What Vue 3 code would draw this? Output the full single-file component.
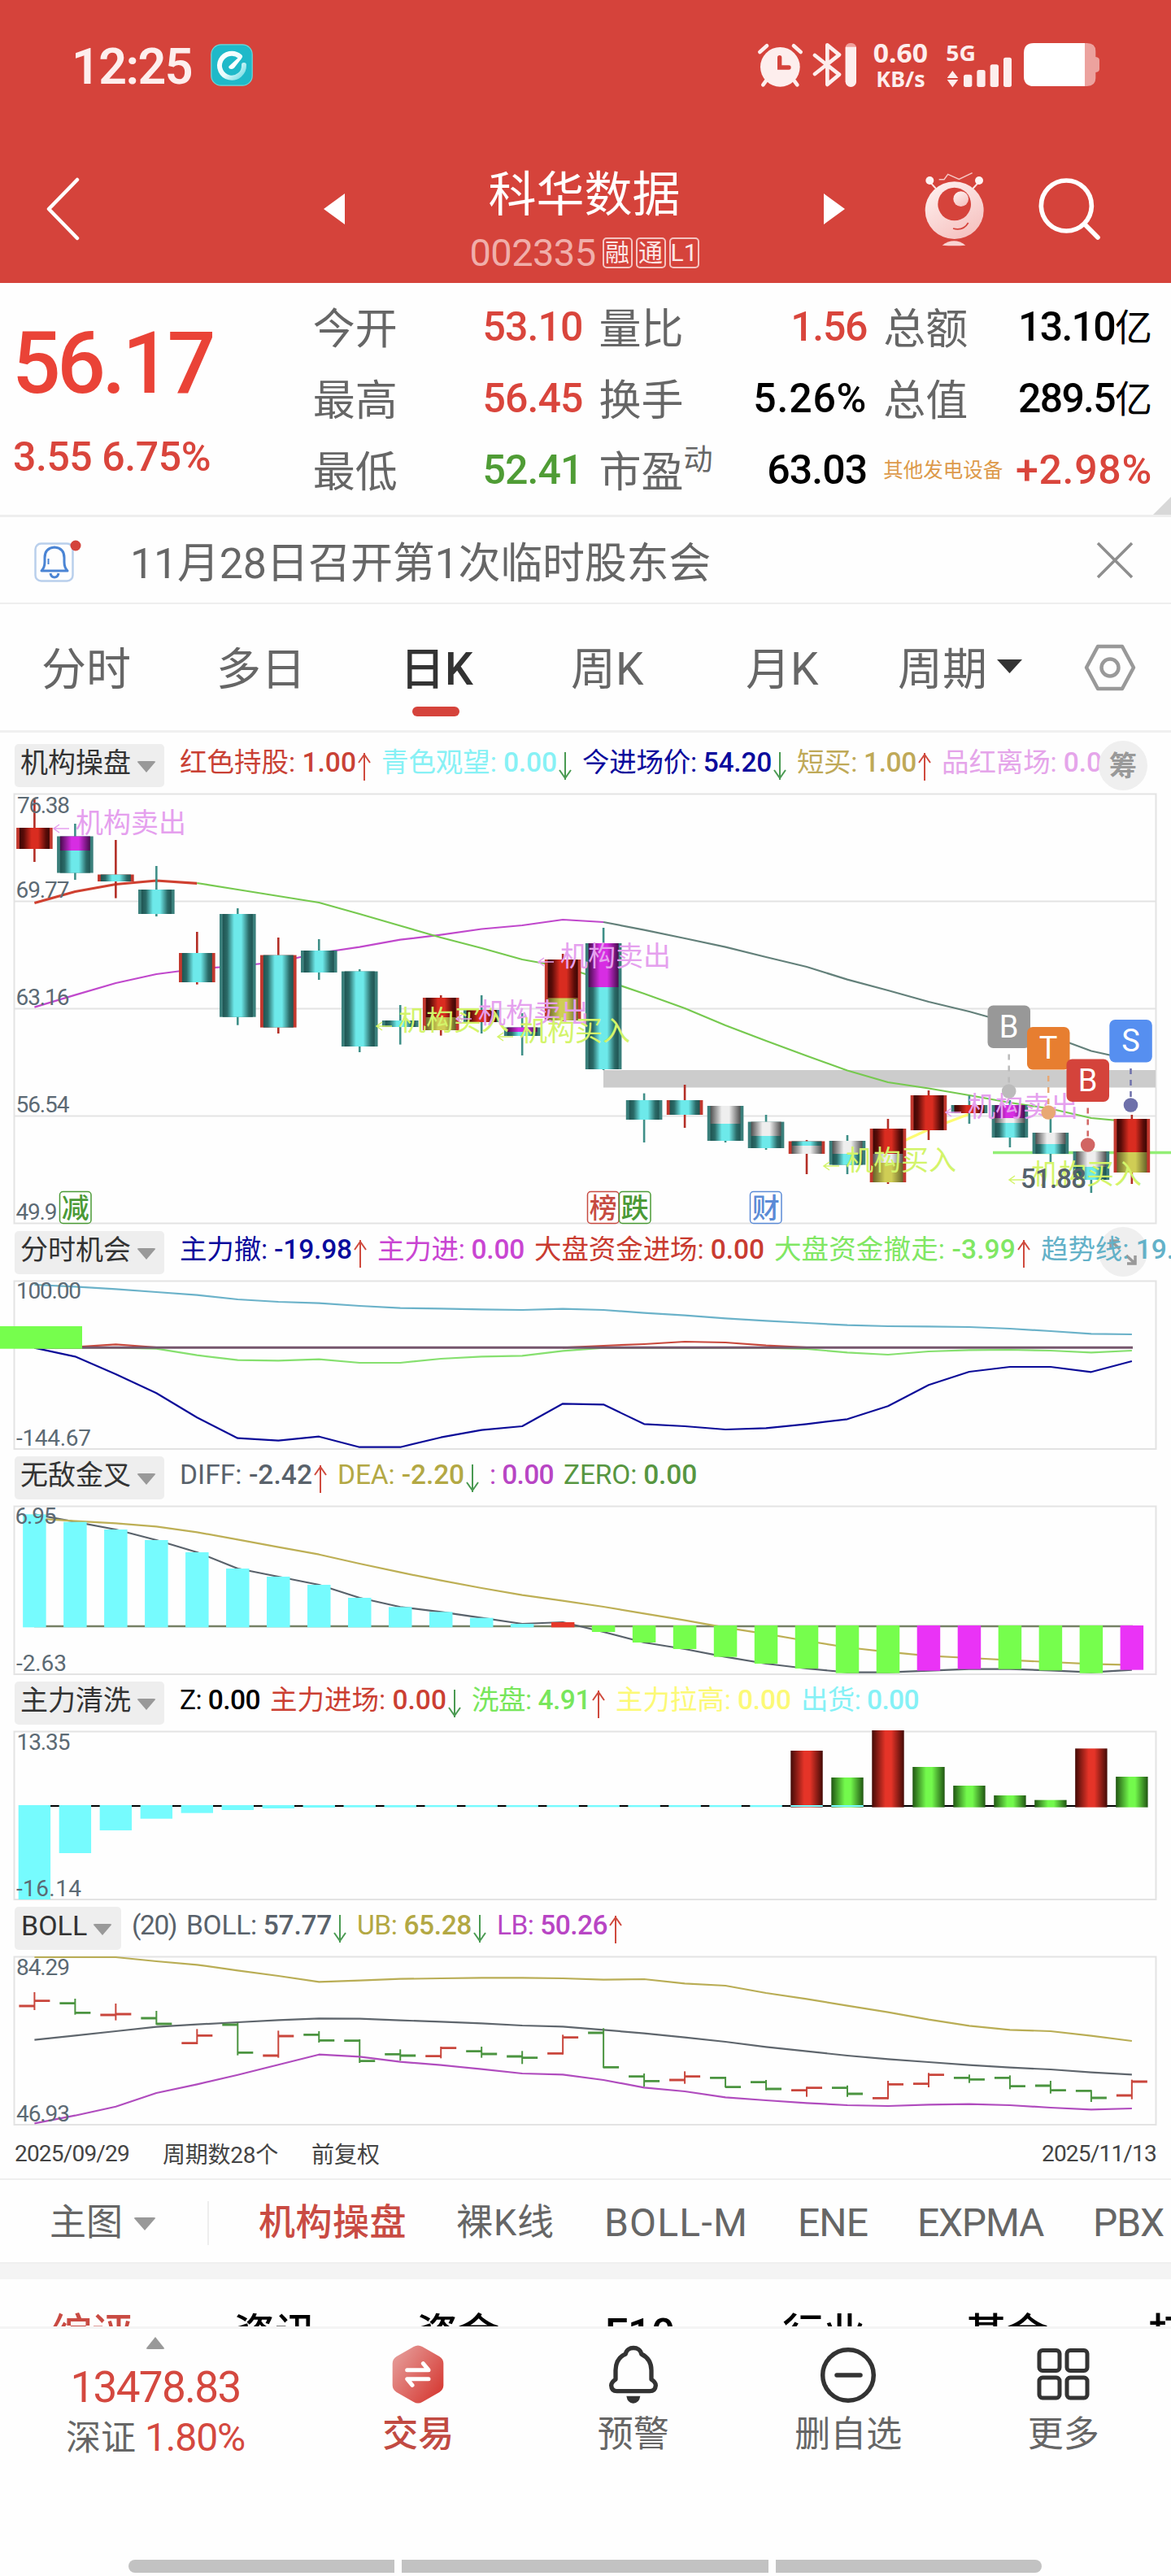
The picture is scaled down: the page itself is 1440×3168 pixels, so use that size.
<script setup>
// Tightens or loosens letter spacing so a label fills its column exactly.
const vFit = {
  mounted(el, { value }) {
    if (!value) return
    const natural = el.getBoundingClientRect().width
    const count = [...el.textContent.trim()].length
    el.style.letterSpacing = `${(value - natural) / count}px`
  }
}

const px = (i) => 42.4 + 49.98 * i
const line = (ys, start = 0, scale = (v) => v) =>
  ys.map((v, i) => `${px(i + start).toFixed(1)},${scale(v).toFixed(1)}`).join(' ')

const quotes = [
  [
    { k: '今开', v: '53.10', w: 123, c: 'red' },
    { k: '最高', v: '56.45', w: 123, c: 'red' },
    { k: '最低', v: '52.41', w: 123, c: 'green' }
  ],
  [
    { k: '量比', v: '1.56', w: 94, c: 'red' },
    { k: '换手', v: '5.26%', w: 140, c: 'black' },
    { k: '市盈', sup: '动', v: '63.03', w: 123, c: 'black' }
  ],
  [
    { k: '总额', v: '13.10', unit: '亿', w: 119, c: 'black' },
    { k: '总值', v: '289.5', unit: '亿', w: 119, c: 'black' },
    { k: '其他发电设备', small: true, v: '+2.98%', w: 168, c: 'red' }
  ]
]

const tabs = ['分时', '多日', '日K', '周K', '月K', '周期']

// name, value, colour, width, trend arrow
const legends = {
  main: [
    ['红色持股: ', '1.00', '#c94135', 217, 'up'],
    ['青色观望: ', '0.00', '#87f1f5', 216, 'down'],
    ['今进场价: ', '54.20', '#0a0a9c', 233, 'down'],
    ['短买: ', '1.00', '#bfa958', 147, 'up'],
    ['品红离场: ', '0.0', '#e5a5ea', 197]
  ],
  chance: [
    ['主力撤: ', '-19.98', '#0a0a9c', 212, 'up'],
    ['主力进: ', '0.00', '#c945d2', 181],
    ['大盘资金进场: ', '0.00', '#c93b30', 283],
    ['大盘资金撤走: ', '-3.99', '#80e763', 297, 'up'],
    ['趋势线: ', '19.', '#63b1c8', 164]
  ],
  cross: [
    ['DIFF: ', '-2.42', '#59626b', 163, 'up'],
    ['DEA: ', '-2.20', '#b3a844', 156, 'down'],
    [': ', '0.00', '#b845c4', 79],
    ['ZERO: ', '0.00', '#579641', 164]
  ],
  wash: [
    ['Z: ', '0.00', '#000', 99],
    ['主力进场: ', '0.00', '#cb3f32', 217, 'down'],
    ['洗盘: ', '4.91', '#78e65b', 146, 'up'],
    ['主力拉高: ', '0.00', '#fcf976', 216],
    ['出货: ', '0.00', '#85f1f6', 145]
  ],
  boll: [
    ['(20)', '', '#59626b', 55],
    ['BOLL: ', '57.77', '#59626b', 179, 'down'],
    ['UB: ', '65.28', '#b3a844', 141, 'down'],
    ['LB: ', '50.26', '#b845c4', 136, 'up']
  ]
}

// high, top, bottom, low, edge colour, body segments [fill, until]
const candles = [
  [983, 1018, 1044, 1060, 'r', [['red', 1044]]],
  [1013, 1028.5, 1073.5, 1082, 't', [['mag', 1046], ['cy', 1073.5]]],
  [1033, 1075.5, 1084, 1104.6, 'r', [['cy', 1084]]],
  [1065, 1094, 1124, 1127, 't', [['cy', 1124]]],
  [1146, 1172, 1208, 1210.7, 'r', [['cy', 1208]]],
  [1117, 1124, 1250.7, 1260.7, 't', [['cy', 1250.7]]],
  [1153, 1174.6, 1263.6, 1271, 'r', [['cy', 1263.6]]],
  [1155, 1169, 1196, 1205, 't', [['cy', 1196]]],
  [1192, 1194.6, 1287, 1294, 't', [['cy', 1287]]],
  [1236, 1255, 1263, 1284.6, 't', [['cy', 1263]]],
  [1224, 1227, 1267, 1273.6, 'r', [['red', 1251], ['ye', 1267]]],
  [1224, 1242, 1257, 1271, 't', [['red', 1257]]],
  [1246, 1263.5, 1274, 1298, 't', [['mag', 1269], ['cy', 1274]]],
  [1173, 1180, 1255, 1256, 'r', [['red', 1227.5], ['ye', 1255]]],
  [1141, 1160, 1315, 1316, 't', [['mag', 1214], ['cy', 1315]]],
  [1344.6, 1353, 1377, 1405, 't', [['cy', 1377]]],
  [1334, 1353, 1371, 1387, 'r', [['cy', 1371]]],
  [1360, 1360, 1403, 1405, 't', [['wh', 1382], ['cy', 1403]]],
  [1371, 1379.6, 1412, 1414, 't', [['wh', 1397], ['cy', 1412]]],
  [1402, 1403.5, 1419, 1444, 'r', [['cy', 1409], ['wh', 1419]]],
  [1396, 1403, 1432.5, 1444, 't', [['wh', 1419], ['cy', 1432.5]]],
  [1376, 1388, 1454, 1456, 'r', [['red', 1419], ['wh', 1430], ['ye', 1454]]],
  [1341, 1347, 1390, 1402, 'r', [['red', 1390]]],
  [1347.5, 1359, 1369, 1382, 't', [['red', 1369]]],
  [1353, 1359, 1399, 1411, 't', [['mag', 1375], ['wh', 1381], ['cy', 1399]]],
  [1376, 1393, 1419, 1431, 't', [['wh', 1407], ['cy', 1419]]],
  [1416, 1416, 1451, 1467, 't', [['wh', 1435], ['cy', 1451]]],
  [1371, 1376, 1442, 1456, 'r', [['red', 1417], ['ye', 1442]]]
].map(([high, top, bottom, low, edge, parts], i) => {
  let y = top
  const segments = parts.map(([fill, end]) => {
    const s = { fill: `url(#g-${fill})`, y, h: end - y }
    y = end
    return s
  })
  return { x: px(i), high, top, bottom, low, segments, stroke: edge === 'r' ? '#b32e26' : '#3f8f88', side: edge === 'r' ? '#c2382e' : '#3a7f7b' }
})

const ma = {
  red: line([1110.5, 1096.5, 1087.5, 1083, 1086.4]),
  green: line([1086, 1094, 1102, 1110, 1124, 1138.5, 1153, 1166, 1180, 1189, 1205, 1222, 1240, 1261, 1280, 1298.5, 1316.5, 1331, 1338.5, 1347, 1356, 1363.5, 1375, 1379.6], 4),
  magenta: line([1238.6, 1223.6, 1209, 1198, 1191.5, 1188, 1183, 1172, 1164.6, 1155.7, 1149.6, 1142.5, 1138, 1131, 1134]),
  slate: line([1134, 1143.6, 1154, 1164.6, 1177, 1189, 1204.6, 1218, 1232, 1244, 1258, 1274, 1292.5, 1303.5], 14)
}

const notes = [
  ['sell', 94, 1024], ['buy', 491, 1267], ['sell', 589, 1258], ['buy', 640, 1280],
  ['sell', 690, 1188], ['buy', 1041, 1439], ['sell', 1191, 1373], ['buy', 1269, 1456]
]

const events = [
  ['减', 73.5, '#4b9a36'], ['榜', 722.5, '#c74b42'], ['跌', 761.5, '#4b9a36'], ['财', 922.5, '#5b8bd6']
]

const signals = [
  { t: 'B', x: 1214.5, y: 1236.5, dot: 1342, fill: '#989898', soft: '#bbb' },
  { t: 'T', x: 1263, y: 1263, dot: 1368, fill: '#e77e30', soft: '#e8a873' },
  { t: 'B', x: 1311.5, y: 1302.5, dot: 1408, fill: '#d4433b', soft: '#d16563' },
  { t: 'S', x: 1364.3, y: 1254, dot: 1359, fill: '#568ff0', soft: '#6e70aa' }
]

const s2 = (v) => 1500 + v / 3
const chance = {
  trend: line([240, 247, 256, 267, 278, 294, 303, 308, 318, 326, 328, 331, 333, 329, 333, 344, 353, 364, 373, 381, 389, 393, 394, 396, 402, 411, 421, 423], 0, s2),
  out: line([473, 505, 570, 640, 730, 806, 815, 800, 839, 839, 803, 776, 762, 679, 682, 754, 762, 774, 769, 754, 736, 688, 610, 561, 543, 543, 562, 522], 0, s2),
  green: line([472, 472, 472, 476, 500, 518, 520, 515, 528, 528, 513, 505, 502, 484, 473, 473, 473, 473, 473, 477, 490, 498, 486, 481, 480, 483, 490, 483], 0, s2),
  red: line([470, 460, 471], 1, s2),
  redTail: line([472, 465, 459, 450, 453, 464, 471], 13, s2)
}

const s3 = (v) => 1780 + v / 3
const diffEnds = [247, 275, 303, 342, 387, 447, 477, 507, 555, 589, 607, 629, 651, 645, 681, 720, 744, 773, 798, 816, 833, 833, 824, 818, 818, 823, 833, 821]
const crossBars = diffEnds.map((v, i) => {
  const above = i < 14
  const y = above ? s3(v) : s3(657)
  const fill = i < 13 ? '#76fbfe' : i === 13 ? '#e5382a' : [22, 23, 27].includes(i) ? '#ea33f6' : '#76fe4d'
  return { x: px(i) - 14.25, y, h: above ? s3(664) - y : s3(v) - y, fill }
})
const diffLine = line(diffEnds.map((v) => (v > 830 ? 830 : v)), 0, s3)
const deaLine = line([262, 272, 280, 292, 313, 340, 368, 395, 429, 461, 491, 519, 545, 566, 588, 613, 638, 665, 688, 714, 738, 755, 769, 777, 785, 792, 799, 803], 0, s3)

const s4 = (v) => 2060 + v / 3
const washDown = [828, 657, 573, 530, 509, 498, 492, 489, 488, 488, 487, 487, 487, 487, 487, 487, 487, 487, 487, 486, 486]
  .map((v, i) => ({ x: px(i) - 19.7, y: s4(480), h: (v - 480) / 3 }))
const washUp = [['r', 279], ['g', 378], ['r', 204], ['g', 339], ['g', 408], ['g', 444], ['g', 461], ['r', 271], ['g', 375]]
  .map(([c, v], i) => ({ x: px(i + 19) - 19.7, y: s4(v), h: (488 - v) / 3, fill: c === 'r' ? 'url(#g-bred)' : 'url(#g-bgreen)' }))

const s5 = (v) => 2330 + v / 3
const boll = {
  ub: line([231, 231, 231, 246, 259, 280, 300, 322, 317, 311, 309, 307, 307, 309, 314, 312, 328, 336, 363, 385, 410, 434, 461, 484, 499, 504, 521, 540], 0, s5),
  mid: line([536, 520, 504, 488, 479, 471, 463, 457, 458, 464, 469, 475, 483, 487, 499, 512, 527, 543, 562, 578, 594, 607, 618, 629, 638, 645, 656, 664], 0, s5),
  lb: line([844, 815, 782, 732, 700, 665, 628, 590, 598, 617, 629, 644, 660, 664, 684, 712, 726, 748, 759, 769, 777, 780, 775, 773, 777, 786, 793, 789], 0, s5)
}
// open, high, low, close
const ohlc = [
  [411, 360, 426, 392], [401, 384, 443, 436], [444, 402, 464, 441], [456, 429, 480, 477],
  [548, 496, 552, 520], [480, 473, 593, 583], [594, 502, 602, 522], [517, 504, 546, 538],
  [539, 534, 621, 614], [589, 571, 613, 594], [596, 561, 604, 566], [578, 561, 602, 588],
  [597, 577, 625, 602], [586, 517, 590, 527], [510, 493, 640, 637], [671, 660, 709, 688],
  [684, 652, 698, 671], [676, 672, 712, 710], [692, 684, 722, 717], [722, 709, 746, 713],
  [713, 704, 746, 735], [751, 687, 755, 700], [698, 658, 711, 665], [676, 664, 695, 682],
  [676, 667, 718, 707], [705, 687, 734, 722], [724, 721, 765, 750], [741, 683, 755, 690]
].map(([o, h, l, c], i) => ({ x: px(i), o: s5(o), h: s5(h), l: s5(l), c: s5(c), color: c < o ? '#c9463c' : '#4b9440' }))

const subTabs = [
  { t: '机构操盘', w: 182, on: true }, { t: '裸K线', w: 121 }, { t: 'BOLL-M', w: 177, en: true },
  { t: 'ENE', w: 86, en: true }, { t: 'EXPMA', w: 155, en: true }, { t: 'PBX', w: 87, en: true }
]
const infoTabs = ['综评', '资讯', '资金', 'F10', '行业', '基金', '打新']
</script>

<template>
  <main class="app">
    <svg class="defs" width="0" height="0" aria-hidden="true">
      <defs>
        <linearGradient id="g-red"><stop offset="0" stop-color="#3d0705" /><stop offset=".14" stop-color="#5a0c08" /><stop offset=".4" stop-color="#d92c20" /><stop offset=".62" stop-color="#d92c20" /><stop offset=".88" stop-color="#5a0c08" /><stop offset="1" stop-color="#3d0705" /></linearGradient>
        <linearGradient id="g-cy"><stop offset="0" stop-color="#205452" /><stop offset=".15" stop-color="#2a6a67" /><stop offset=".38" stop-color="#6de9ea" /><stop offset=".62" stop-color="#6de9ea" /><stop offset=".87" stop-color="#2a6a67" /><stop offset="1" stop-color="#205452" /></linearGradient>
        <linearGradient id="g-mag"><stop offset="0" stop-color="#470b4c" /><stop offset=".38" stop-color="#d72de3" /><stop offset=".62" stop-color="#d72de3" /><stop offset="1" stop-color="#470b4c" /></linearGradient>
        <linearGradient id="g-wh"><stop offset="0" stop-color="#505050" /><stop offset=".38" stop-color="#eee" /><stop offset=".62" stop-color="#eee" /><stop offset="1" stop-color="#505050" /></linearGradient>
        <linearGradient id="g-ye"><stop offset="0" stop-color="#67632a" /><stop offset=".4" stop-color="#cfcd55" /><stop offset=".62" stop-color="#cfcd55" /><stop offset="1" stop-color="#67632a" /></linearGradient>
        <linearGradient id="g-bred"><stop offset="0" stop-color="#430a06" /><stop offset=".42" stop-color="#e53428" /><stop offset=".6" stop-color="#e53428" /><stop offset="1" stop-color="#430a06" /></linearGradient>
        <linearGradient id="g-bgreen"><stop offset="0" stop-color="#205512" /><stop offset=".42" stop-color="#73f94c" /><stop offset=".6" stop-color="#73f94c" /><stop offset="1" stop-color="#205512" /></linearGradient>
        <linearGradient id="g-robot" x1="0" y1="0" x2=".6" y2="1"><stop offset="0" stop-color="#fff4f3" /><stop offset="1" stop-color="#f6c4c2" /></linearGradient>
        <linearGradient id="g-trade" x1="0" y1="0.1" x2="1" y2=".9"><stop offset="0" stop-color="#e6a09d" /><stop offset="1" stop-color="#d5352e" /></linearGradient>
        <linearGradient id="g-app" x1="0" y1="0" x2="1" y2="1"><stop offset="0" stop-color="#fff" /><stop offset=".55" stop-color="#e9fbfc" /><stop offset="1" stop-color="#6fdbe3" /></linearGradient>
      </defs>
    </svg>

    <header class="header">
      <div class="status">
        <span v-fit="148" class="clock">12:25</span>
        <svg class="app-badge" width="52" height="52" viewBox="0 0 52 52">
          <rect x=".8" y=".8" width="50.4" height="50.4" rx="12" fill="#1fb9c9" stroke="#72d5d6" stroke-width="1.2" />
          <path d="M36 15.5A15 15 0 1 0 41 26" fill="none" stroke="url(#g-app)" stroke-width="6" stroke-linecap="round" />
          <path d="M22.5 27.5L35 16l3 2-9 11.5c-2 2.500-8 1.500-6.500-2z" fill="#fff" />
        </svg>
        <svg class="status-icons" width="425" height="63.33" viewBox="30 30 1275 190" fill="#fdeeed">
          <circle cx="118" cy="127" r="73" />
          <g stroke="#fdeeed" stroke-width="14" stroke-linecap="round"><path d="M43 72l26-23M194 72l-26-23M66 178l-11 15M170 178l11 15" /></g>
          <path d="M116 92v37h34" fill="none" stroke="#d5433b" stroke-width="16" stroke-linecap="round" />
          <path d="M246 84l90 71-44 37V46l44 36-90 71" fill="none" stroke="#fdeeed" stroke-width="14" stroke-linecap="round" stroke-linejoin="round" />
          <rect x="359" y="39" width="40" height="159" rx="17" fill="#f0a09b" />
          <path d="M359 53h40v128a17 17 0 0 1-40 0z" />
          <g font-family="'Noto Sans', sans-serif" font-weight="700">
            <text x="461" y="112" font-size="96" textLength="202" lengthAdjust="spacingAndGlyphs">0.60</text>
            <text x="472" y="200" font-size="82" textLength="181" lengthAdjust="spacingAndGlyphs">KB/s</text>
            <text x="730" y="104" font-size="82" textLength="110" lengthAdjust="spacingAndGlyphs">5G</text>
          </g>
          <path d="M734 168l20-27 21 27zM734 174h41l-21 28z" />
          <rect x="795" y="155" width="31" height="46" rx="8" /><rect x="844" y="138" width="31" height="63" rx="8" />
          <rect x="893" y="118" width="31" height="83" rx="8" /><rect x="942" y="92" width="30" height="109" rx="8" />
          <path d="M1240 39h10q32 0 32 30v21q14 2 14 12v33q0 10-14 12v21q0 30-32 30h-10z" fill="#eca29e" />
          <path d="M1242 39h-188q-37 0-37 37v85q0 37 37 37h188z" fill="#fff" />
        </svg>
      </div>

      <nav class="nav">
        <svg class="back" width="44" height="78" viewBox="0 0 44 78"><path d="M40 3L5 39l35 36" fill="none" stroke="#fff" stroke-width="4.500" stroke-linecap="round" stroke-linejoin="round" /></svg>
        <svg class="prev" width="26" height="38" viewBox="0 0 26 38"><path d="M0 19L26 0v38z" fill="#fff" /></svg>
        <div class="title">
          <h1>科华数据</h1>
          <div class="code"><span v-fit="155" class="num">002335</span><i>融</i><i>通</i><i>L1</i></div>
        </div>
        <svg class="next" width="26" height="38" viewBox="0 0 26 38"><path d="M26 19L0 0v38z" fill="#fff" /></svg>
        <svg class="robot" width="83.33" height="100" viewBox="640 500 250 300">
          <g stroke="#fbe3e1" fill="none" stroke-width="6"><path d="M676 555l18 20M848 555l-18 20" /><path d="M705 541h19l14-19 41 18 49-23" stroke="#f6c8c5" stroke-width="4.500" /></g>
          <circle cx="671" cy="545" r="15" fill="#fff3f2" /><circle cx="853" cy="545" r="15" fill="#fff3f2" />
          <ellipse cx="762" cy="655" rx="108" ry="106" fill="url(#g-robot)" />
          <circle cx="762" cy="632" r="61" fill="#d5433b" />
          <circle cx="786" cy="613" r="28" fill="url(#g-robot)" />
          <path d="M757 722q38 10 56-21" fill="none" stroke="#d5433b" stroke-width="5" />
          <path d="M717 784q44-33 86 0-42 4-86 0z" fill="#f9d3d1" />
        </svg>
        <svg class="search" width="81.67" height="81.67" viewBox="1065 525 245 245" fill="none" stroke="#fff" stroke-width="17" stroke-linecap="round"><circle cx="1177" cy="639" r="93" /><path d="M1246 709l47 47" /></svg>
      </nav>
    </header>

    <section class="quote">
      <div class="price">
        <strong v-fit="246">56.17</strong>
        <span v-fit="243">3.55 6.75%</span>
      </div>
      <div v-for="(col, n) in quotes" :key="n" class="qcol">
        <div v-for="q in col" :key="q.k" class="qrow">
          <span class="label" :class="{ small: q.small }">{{ q.k }}<sup v-if="q.sup">{{ q.sup }}</sup></span>
          <span class="value" :class="q.c"><b v-fit="q.w">{{ q.v }}</b><em v-if="q.unit">{{ q.unit }}</em></span>
        </div>
      </div>
      <i class="corner"></i>
    </section>

    <section class="notice">
      <svg width="60" height="60" viewBox="0 0 60 60" fill="none" stroke="#4a84d4" stroke-width="3">
        <rect x="1.500" y="9.500" width="46" height="46" rx="7" stroke="#b9cfec" stroke-width="2.500" />
        <path d="M9 43h32q-4-4-4-11v-5q0-12-12-13-12 1-12 13v5q0 7-4 11zM20 46q1 5 5 5t5-5" stroke-linejoin="round" /><path d="M17.500 35v-7" stroke-width="2" />
        <circle cx="51" cy="12" r="6.500" fill="#d4433b" stroke="none" />
      </svg>
      <p v-fit="714">11月28日召开第1次临时股东会</p>
      <svg width="46" height="46" viewBox="0 0 46 46"><path d="M2 2l42 42M44 2L2 44" stroke="#8e8e8e" stroke-width="3.500" /></svg>
    </section>

    <section class="tabs">
      <span v-for="(t, i) in tabs" :key="t" :class="{ active: i === 2 }">{{ t }}<svg v-if="i === 5" width="31" height="17" viewBox="0 0 31 17"><path d="M0 0h31L15.500 17z" fill="#333" /></svg></span>
      <svg width="66" height="60" viewBox="0 0 66 60" fill="none" stroke="#999" stroke-width="4.500" stroke-linejoin="round"><path d="M18 4h30l14 26-14 26H18L4 30z" /><circle cx="33" cy="30" r="10.500" /></svg>
    </section>

    <section class="legend">
      <span class="chip"><b>机构操盘</b><i></i></span>
      <span v-for="l in legends.main" :key="l[0]" class="item" :style="{ color: l[2] }"><b v-fit="l[3]">{{ l[0] }}<em>{{ l[1] }}</em></b><svg v-if="l[4]" :class="l[4]" width="18" height="34" viewBox="0 0 18 34"><path d="M9 0v34M2 12L9 2l7 10" /></svg></span>
      <span class="round">筹</span>
    </section>
    <svg class="chart" width="1440" height="538" viewBox="0 976 1440 538">
      <g class="frame"><rect x="17.500" y="976.500" width="1404" height="528" /><path d="M18 1108.500h1403M18 1240.500h1403M18 1372.500h1403" /></g>
      <polyline :points="ma.magenta" stroke="#c048cc" class="ln" />
      <polyline :points="ma.red" stroke="#cf4030" class="ln thick" />
      <polyline :points="ma.slate" stroke="#63807a" class="ln" />
      <rect x="742" y="1316" width="679" height="21.500" fill="#ccc" />
      <polyline :points="ma.green" stroke="#76c94f" class="ln" />
      <path d="M1221 1417.500h219" stroke="#92ee75" stroke-width="3.500" />
      <path d="M1092 1412l50-23 50-19" class="ln thick" stroke="#fdfb72" />
      <g v-for="(c, i) in candles" :key="i">
        <path :d="`M${c.x} ${c.high}V${c.low}`" :stroke="c.stroke" stroke-width="2.600" />
        <rect :x="c.x - 22.3" :y="c.top" width="44.600" :height="c.bottom - c.top" :fill="c.side" />
        <rect v-for="(s, j) in c.segments" :key="j" :x="c.x - 18.500" :y="s.y" width="37" :height="s.h" :fill="s.fill" />
      </g>
      <g class="axis">
        <text x="21" y="999.500" textLength="65">76.38</text><text x="19.500" y="1104" textLength="66">69.77</text>
        <text x="19.500" y="1236" textLength="66">63.16</text><text x="19.500" y="1368" textLength="66">56.54</text><text x="19.500" y="1500" textLength="51">49.9</text>
      </g>
      <g v-for="(n, i) in notes" :key="i" class="note" :fill="n[0] === 'sell' ? '#e5a0ee' : '#d3f46a'">
        <path :d="`M${n[1] - 28} ${n[2] - 5}h19m-12 -5l-7 5l7 5`" fill="none" :stroke="n[0] === 'sell' ? '#e5a0ee' : '#d3f46a'" stroke-width="1.500" />
        <text :x="n[1] - 1" :y="n[2]">{{ n[0] === 'sell' ? '机构卖出' : '机构买入' }}</text>
      </g>
      <text x="1255" y="1461" textLength="81" class="low">51.88</text>
      <g v-for="e in events" :key="e[0]">
        <rect :x="e[1]" y="1465.500" width="38.500" height="39" rx="4" fill="#fff" :stroke="e[2]" stroke-width="1.500" />
        <text :x="e[1] + 19.3" y="1497.500" text-anchor="middle" font-size="34" :fill="e[2]" font-weight="500">{{ e[0] }}</text>
      </g>
      <g v-for="s in signals" :key="s.x">
        <path :d="`M${s.x + 26.2} ${s.y + 60}V${s.dot}`" :stroke="s.soft" stroke-width="2.500" stroke-dasharray="7 7" />
        <circle :cx="s.x + 26.2" :cy="s.dot" r="8.800" :fill="s.soft" />
      </g>
      <g v-for="s in signals" :key="s.y">
        <rect :x="s.x" :y="s.y" width="52.500" height="52.500" rx="7" :fill="s.fill" />
        <text :x="s.x + 26.2" :y="s.y + 39" text-anchor="middle" font-size="38" fill="#fff">{{ s.t }}</text>
      </g>
    </svg>

    <section class="legend">
      <span class="chip"><b>分时机会</b><i></i></span>
      <span class="round under"><svg width="34" height="32" viewBox="0 0 34 32" fill="none" stroke="#999" stroke-width="3.500"><path d="M2 12V2h10M2 2l11 10M32 20v10H22M32 30L21 20" /></svg></span>
      <span v-for="l in legends.chance" :key="l[0]" class="item" :style="{ color: l[2] }"><b v-fit="l[3]">{{ l[0] }}<em>{{ l[1] }}</em></b><svg v-if="l[4]" :class="l[4]" width="18" height="34" viewBox="0 0 18 34"><path d="M9 0v34M2 12L9 2l7 10" /></svg></span>
    </section>
    <svg class="chart" width="1440" height="215" viewBox="0 1576 1440 215">
      <g class="frame"><rect x="17.500" y="1575.500" width="1404" height="206.500" /></g>
      <polyline :points="chance.trend" class="ln" stroke="#6bb2c9" />
      <polyline :points="chance.green" class="ln" stroke="#86e06f" />
      <polyline :points="chance.red" class="ln" stroke="#c9493d" /><polyline :points="chance.redTail" class="ln" stroke="#c9493d" />
      <polyline :points="chance.out" class="ln" stroke="#0c0c98" />
      <path d="M42 1657.300H1393" stroke="#75566d" stroke-width="3" />
      <rect x="0" y="1631" width="101" height="27.700" fill="#76fe4d" />
      <g class="axis"><text x="20" y="1597" textLength="80">100.00</text><text x="20" y="1778" textLength="92">-144.67</text></g>
    </svg>

    <section class="legend">
      <span class="chip"><b>无敌金叉</b><i></i></span>
      <span v-for="l in legends.cross" :key="l[0]" class="item" :style="{ color: l[2] }"><b v-fit="l[3]">{{ l[0] }}<em>{{ l[1] }}</em></b><svg v-if="l[4]" :class="l[4]" width="18" height="34" viewBox="0 0 18 34"><path d="M9 0v34M2 12L9 2l7 10" /></svg></span>
    </section>
    <svg class="chart" width="1440" height="215" viewBox="0 1853 1440 215">
      <g class="frame"><rect x="17.500" y="1852.500" width="1404" height="206.500" /></g>
      <path d="M42 2000H1393" stroke="#758065" stroke-width="2.600" />
      <polyline :points="diffLine" class="ln" stroke="#59626b" /><polyline :points="deaLine" class="ln" stroke="#bdaf55" />
      <rect v-for="(b, i) in crossBars" :key="i" :x="b.x" :y="b.y" width="28.500" :height="b.h" :fill="b.fill" />
      <g class="axis"><text x="18.500" y="1874" textLength="51">6.95</text><text x="20" y="2055" textLength="62">-2.63</text></g>
    </svg>

    <section class="legend">
      <span class="chip"><b>主力清洗</b><i></i></span>
      <span v-for="l in legends.wash" :key="l[0]" class="item" :style="{ color: l[2] }"><b v-fit="l[3]">{{ l[0] }}<em>{{ l[1] }}</em></b><svg v-if="l[4]" :class="l[4]" width="18" height="34" viewBox="0 0 18 34"><path d="M9 0v34M2 12L9 2l7 10" /></svg></span>
    </section>
    <svg class="chart" width="1440" height="215" viewBox="0 2130 1440 215">
      <g class="frame"><rect x="17.500" y="2129.500" width="1404" height="206.500" /></g>
      <path d="M42 2221H1393" stroke="#000" stroke-width="2.200" />
      <rect v-for="(b, i) in washUp" :key="'u' + i" :x="b.x" :y="b.y" width="39.400" :height="b.h" :fill="b.fill" />
      <rect v-for="(b, i) in washDown" :key="'d' + i" :x="b.x" :y="b.y" width="39.400" :height="b.h" fill="#76fbfe" />
      <g class="axis"><text x="20.500" y="2152" textLength="66">13.35</text><text x="20" y="2332" textLength="80">-16.14</text></g>
    </svg>

    <section class="legend">
      <span class="chip short"><b>BOLL</b><i></i></span>
      <span v-for="l in legends.boll" :key="l[0]" class="item" :style="{ color: l[2] }"><b v-fit="l[3]">{{ l[0] }}<em>{{ l[1] }}</em></b><svg v-if="l[4]" :class="l[4]" width="18" height="34" viewBox="0 0 18 34"><path d="M9 0v34M2 12L9 2l7 10" /></svg></span>
    </section>
    <svg class="chart" width="1440" height="215" viewBox="0 2407 1440 215">
      <g class="frame"><rect x="17.500" y="2406.500" width="1404" height="206.500" /></g>
      <polyline :points="boll.ub" class="ln" stroke="#b9ad55" /><polyline :points="boll.mid" class="ln" stroke="#5f666d" />
      <g v-for="(b, i) in ohlc" :key="i" :stroke="b.color"><path :d="`M${b.x} ${b.h}V${b.l}`" stroke-width="2" /><path :d="`M${b.x - 19} ${b.o}H${b.x}M${b.x} ${b.c}h19`" stroke-width="2.800" /></g>
      <polyline :points="boll.lb" class="ln" stroke="#b04cbe" />
      <g class="axis"><text x="20" y="2429" textLength="66">84.29</text><text x="20" y="2609" textLength="66">46.93</text></g>
    </svg>

    <section class="dates">
      <span v-fit="141">2025/09/29</span><span v-fit="142">周期数28个</span><span>前复权</span><span v-fit="141" class="end">2025/11/13</span>
    </section>

    <section class="subtabs">
      <span class="pick">主图<i></i></span>
      <span v-for="s in subTabs" :key="s.t" v-fit="s.w" :class="{ on: s.on, en: s.en }">{{ s.t }}</span>
    </section>
    <div class="band"></div>
    <section class="info"><span v-for="t in infoTabs" :key="t">{{ t }}</span></section>

    <footer class="bar">
      <div class="index">
        <i></i>
        <strong v-fit="209">13478.83</strong>
        <span>深证<b v-fit="123">1.80%</b></span>
      </div>
      <div class="act hot">
        <svg width="72" height="76" viewBox="119 64 216 228"><path d="M211 76q16-9 32 0l63 36q15 9 15 26v80q0 17-15 26l-63 36q-16 9-32 0l-63-36q-15-9-15-26v-80q0-17 15-26z" fill="url(#g-trade)" /><path d="M187 162h79l-20-24M266 195h-79l19 23" fill="none" stroke="#fff" stroke-width="15" stroke-linecap="round" stroke-linejoin="round" /></svg>
        <span>交易</span>
      </div>
      <div class="act">
        <svg width="72" height="76" viewBox="911 64 216 228"><path d="M990 103c4-30 54-30 58 0 24 12 37 33 37 60v34q16 10 16 22-2 21-22 21H958q-20 0-21-21 1-13 16-22v-34q1-45 37-60z" fill="none" stroke="#333" stroke-width="16" stroke-linejoin="round" /><path d="M993 258h51q-4 26-26 27-21-1-25-27z" fill="#333" /></svg>
        <span>预警</span>
      </div>
      <div class="act">
        <svg width="72" height="76" viewBox="0 0 72 76" fill="none" stroke="#333" stroke-width="5.500" stroke-linecap="round"><circle cx="36" cy="39" r="31.300" /><path d="M22 39h29" /></svg>
        <span>删自选</span>
      </div>
      <div class="act">
        <svg width="72" height="76" viewBox="0 0 72 76" fill="none" stroke="#333" stroke-width="5"><rect x="6" y="8.500" width="25" height="25" rx="4" /><rect x="40" y="8.500" width="25" height="25" rx="4" /><rect x="6" y="42" width="25" height="25" rx="4" /><rect x="40" y="42" width="25" height="25" rx="4" /></svg>
        <span>更多</span>
      </div>
    </footer>
    <div class="home"><i></i><i></i><i></i></div>
  </main>
</template>

<style>
body { margin: 0; background: #fff; }
</style>

<style scoped>
.app { width: 1440px; height: 3168px; overflow: hidden; background: #fefefe; font-family: Roboto, "Noto Sans CJK SC", sans-serif; color: #666; display: flex; flex-direction: column; }
.app > * { flex: none; box-sizing: border-box; }
.app i, .app em { font-style: normal; }
b, strong { font-weight: inherit; }
span, p, b, strong, h1 { white-space: nowrap; }
svg { display: block; flex: none; overflow: visible; }
.defs { position: absolute; }

.header { height: 348px; background: #d5433b; color: #fff; }
.status { display: flex; height: 172px; align-items: flex-start; padding-left: 88px; box-sizing: border-box; padding-top: 50px; }
.clock { font-size: 61px; line-height: 64px; font-weight: 600; color: #fdeeed; }
.app-badge { margin: 4px 0 0 23px; }
.status-icons { margin-left: 619px; }
.nav { display: flex; align-items: flex-start; }
.back { margin: 46px 0 0 55px; }
.prev { margin: 66px 0 0 299px; }
.title { width: 589px; text-align: center; padding-top: 33px; }
h1 { margin: 0; font-size: 59px; line-height: 70px; font-weight: 400; }
.code { display: flex; justify-content: center; align-items: center; height: 40px; margin-top: 16px; }
.code .num { font-size: 47px; line-height: 40px; color: #f0aeaa; font-weight: 400; margin-right: 8px; }
.code i { width: 37px; height: 38px; line-height: 34px; box-sizing: border-box; border: 2px solid #f4c4c1; border-radius: 5px; font-size: 30px; color: #fbe6e5; margin-right: 4px; }
.code i:last-child { margin-right: 0; }
.next { margin-top: 66px; }
.robot { margin: 35px 0 0 94px; }
.search { margin: 43px 0 0 58px; }

.quote { height: 288px; border-bottom: 3px solid #eee; display: flex; padding: 9px 23px 0 18px; position: relative; }
.price { width: 367px; display: flex; flex-direction: column; align-items: flex-start; color: #d9453c; }
.price strong { font-size: 105px; line-height: 110px; margin: 36px 0 0 -3px; font-weight: 500; color: #ea4337; }
.price span { font-size: 50px; line-height: 60px; margin: 29px 0 0 -2px; font-weight: 500; }
.qcol { width: 332px; margin-right: 20px; }
.qcol:nth-child(3) { width: 330px; }
.qcol:nth-child(4) { margin-right: 0; width: 331px; }
.qrow { height: 88px; display: flex; justify-content: space-between; align-items: center; }
.label { font-size: 52px; line-height: 76px; color: #666; margin-top: 9px; }
.label sup { font-size: 36px; line-height: 1; vertical-align: 21px; }
.label.small { font-size: 24.500px; color: #dd9a4a; margin-top: 4px; }
.value { font-size: 50px; line-height: 80px; font-weight: 500; margin-top: 2px; }
.value b { display: inline-block; }
.value em { font-size: 46px; font-weight: 400; }
.red { color: #d9453c; } .green { color: #4f9c35; } .black { color: #000; }
.corner { position: absolute; right: 0; bottom: 0; border-left: 22px solid transparent; border-bottom: 22px solid #d8d8d8; }

.notice { height: 107px; border-bottom: 2px solid #eee; display: flex; align-items: center; padding: 0 46px 0 42px; }
.notice p { margin: 10px auto 0 58px; font-size: 52px; line-height: 70px; }

.tabs { height: 158px; border-bottom: 3px solid #f0f0f0; display: grid; grid-template-columns: 215px 226px 210px 215px 187px 228px auto; justify-content: start; align-items: center; padding: 4px 0 0 51px; font-size: 55px; }
.tabs span { display: flex; align-items: center; gap: 12px; position: relative; line-height: 80px; }
.tabs span svg { margin-top: -6px; }
.tabs > svg { margin-top: -3px; }
.tabs .active { color: #333; font-weight: 500; }
.tabs .active::after { content: ""; position: absolute; left: 15px; top: 86px; width: 58px; height: 12px; border-radius: 6px; background: #d5433b; }

.legend { height: 62px; display: flex; align-items: flex-start; padding-left: 18px; position: relative; font-size: 34px; }
.tabs + .legend { height: 75px; padding-top: 14px; }
.chip { flex: none; width: 184px; height: 53px; border-radius: 5px; background: #eee; color: #333; display: flex; align-items: center; padding-left: 7px; box-sizing: border-box; margin-right: 19px; }
.chip b { line-height: 40px; margin-top: -7px; }
.chip i, .pick i { border: 12px solid transparent; border-top: 14px solid #999; border-bottom: 0; margin: 3px 0 0 7px; border-radius: 3px; }
.chip.short { width: 131px; margin-right: 13px; padding-left: 8px; }
.item { display: flex; margin-right: 12px; font-size: 33.500px; height: 53px; align-items: center; position: relative; flex: none; }
.item b { line-height: 40px; margin-top: -7px; display: block; font-weight: 400; white-space: pre; }
.item em { font-weight: 500; }
.item svg { margin: 2px 0 0 1px; fill: none; stroke: #cf4a3e; stroke-width: 2; }
.item svg.down { transform: rotate(180deg); stroke: #4a9a52; margin-top: 0; }
.round { position: absolute; left: 1351px; top: 10px; width: 60px; height: 61px; border-radius: 50%; background: #efefef; color: #999; font-weight: 600; line-height: 60px; display: grid; place-items: center; }
.round.under { top: -5px; }

.frame rect, .frame path { fill: none; stroke: #e3e3e3; stroke-width: 2; }
.ln { fill: none; stroke-width: 2.200px; stroke-linejoin: round; }
.ln.thick { stroke-width: 3.200px; }
.axis { font-size: 28px; fill: #5c6a74; }
.low { font-size: 33px; fill: #55626c; font-weight: 500; }
.note { font-size: 34px; }

.dates { height: 59px; display: flex; align-items: center; padding: 0 18px 5px; font-size: 28px; color: #444; border-bottom: 2px solid #efefef; }
.dates span { margin-right: 41px; }
.dates .end { margin: 0 0 0 auto; }

.subtabs { height: 103px; border-bottom: 2px solid #efefef; display: flex; align-items: center; font-size: 45px; padding-left: 61px; overflow: hidden; }
.subtabs span { margin-right: 61px; flex: none; line-height: 60px; margin-top: 4px; }
.subtabs .pick { display: flex; width: 194px; height: 54px; align-items: center; border-right: 2px solid #eee; }
.pick i { border-width: 16px 14px 0; margin: 3px 0 0 13px; }
.subtabs .on { color: #c94b43; font-weight: 500; }
.subtabs .en { font-size: 48px; }
.band { height: 19px; background: #f4f4f4; }
.info { height: 61px; border-bottom: 3px solid #f4f4f4; overflow: hidden; display: grid; grid-template-columns: repeat(7, 225px); padding: 38px 0 0 62px; font-size: 51px; line-height: 60px; color: #000; font-weight: 500; }
.info span:first-child { color: #c94b43; }
.info span:nth-child(4) { padding-left: 7px; }

.bar { height: 284px; display: flex; }
.index { width: 382px; display: flex; flex-direction: column; align-items: center; color: #d4483f; }
.index i { border: 12px solid transparent; border-bottom: 15px solid #999; border-top: 0; margin-top: 10px; border-radius: 3px; }
.index strong { font-size: 53px; line-height: 60px; margin-top: 17px; }
.index span { color: #666; font-size: 43px; line-height: 60px; margin-top: 2px; display: flex; align-items: center; }
.index span b { font-size: 48px; color: #d4483f; margin-left: 11px; }
.act { width: 264.500px; display: flex; flex-direction: column; align-items: center; padding-top: 18px; }
.act span { font-size: 44px; line-height: 60px; margin-top: 6px; }
.act.hot span { color: #c14a42; font-weight: 500; }
.home { display: flex; gap: 9px; padding-left: 158px; height: 20px; }
.home i { height: 16px; width: 451px; background: #c2c2c2; }
.home i:first-child { width: 327px; border-radius: 8px 0 0 8px; }
.home i:last-child { width: 327px; border-radius: 0 8px 8px 0; }
</style>
